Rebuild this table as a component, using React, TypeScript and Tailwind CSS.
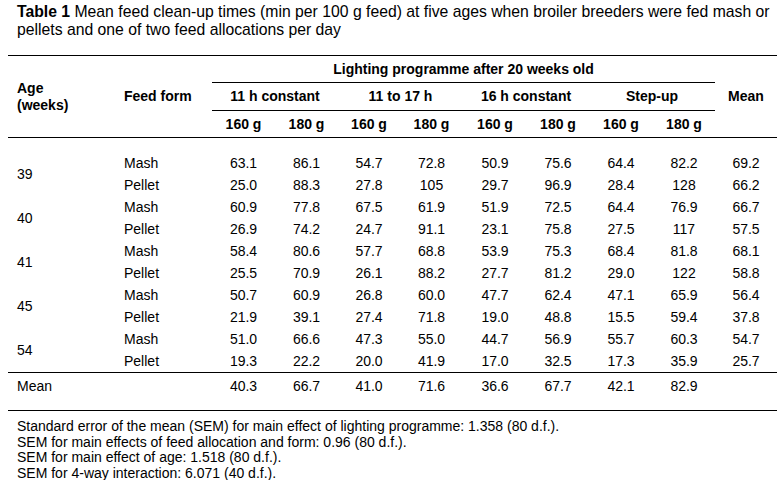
const rows = [
  { age: "39", mash: ["63.1", "86.1", "54.7", "72.8", "50.9", "75.6", "64.4", "82.2", "69.2"], pellet: ["25.0", "88.3", "27.8", "105", "29.7", "96.9", "28.4", "128", "66.2"] },
  { age: "40", mash: ["60.9", "77.8", "67.5", "61.9", "51.9", "72.5", "64.4", "76.9", "66.7"], pellet: ["26.9", "74.2", "24.7", "91.1", "23.1", "75.8", "27.5", "117", "57.5"] },
  { age: "41", mash: ["58.4", "80.6", "57.7", "68.8", "53.9", "75.3", "68.4", "81.8", "68.1"], pellet: ["25.5", "70.9", "26.1", "88.2", "27.7", "81.2", "29.0", "122", "58.8"] },
  { age: "45", mash: ["50.7", "60.9", "26.8", "60.0", "47.7", "62.4", "47.1", "65.9", "56.4"], pellet: ["21.9", "39.1", "27.4", "71.8", "19.0", "48.8", "15.5", "59.4", "37.8"] },
  { age: "54", mash: ["51.0", "66.6", "47.3", "55.0", "44.7", "56.9", "55.7", "60.3", "54.7"], pellet: ["19.3", "22.2", "20.0", "41.9", "17.0", "32.5", "17.3", "35.9", "25.7"] },
]

const means = ["40.3", "66.7", "41.0", "71.6", "36.6", "67.7", "42.1", "82.9", ""]
const groups = ["11 h constant", "11 to 17 h", "16 h constant", "Step-up"]

export default function App() {
  return (
    <div className="w-[780px] h-[480px] bg-white text-black overflow-hidden font-['Liberation_Sans',Arial,sans-serif]">
      <p className="pl-[17px] pt-[3px] text-[15.75px] leading-[17.5px] whitespace-nowrap">
        <b>Table 1</b> Mean feed clean-up times (min per 100 g feed) at five ages when broiler breeders were fed mash or
        <br />
        pellets and one of two feed allocations per day
      </p>

      <table className="ml-2 mt-[17px] w-[769px] table-fixed border-collapse text-[14px]">
        <colgroup>
          <col className="w-[109px]" />
          <col className="w-[95px]" />
          <col className="w-[63px]" />
          <col className="w-[63px]" />
          <col className="w-[62px]" />
          <col className="w-[63px]" />
          <col className="w-[64px]" />
          <col className="w-[62px]" />
          <col className="w-[64px]" />
          <col className="w-[62px]" />
          <col className="w-[62px]" />
        </colgroup>
        <thead className="font-bold">
          <tr className="h-[27px] border-t border-black">
            <th rowSpan={3} className="pl-[9px] text-left align-middle font-bold leading-[17px] border-b border-black">
              Age
              <br />
              (weeks)
            </th>
            <th rowSpan={3} className="pl-[7px] text-left align-middle font-bold border-b border-black">
              Feed form
            </th>
            <th colSpan={8} className="text-center font-bold border-b border-black">
              Lighting programme after 20 weeks old
            </th>
            <th rowSpan={3} className="text-center font-bold border-b border-black">
              Mean
            </th>
          </tr>
          <tr className="h-[28px]">
            {groups.map((g) => (
              <th key={g} colSpan={2} className="text-center font-bold border-b border-black">
                {g}
              </th>
            ))}
          </tr>
          <tr className="h-[27px] border-b border-black">
            {groups.map((g) => (
              <>
                <th key={g + "a"} className="text-center font-bold">160 g</th>
                <th key={g + "b"} className="text-center font-bold">180 g</th>
              </>
            ))}
          </tr>
        </thead>
        <tbody>
          <tr className="h-[15px]">
            <td colSpan={11}></td>
          </tr>
          {rows.map((r) => (
            <>
              <tr key={r.age + "m"} className="h-[22px]">
                <td rowSpan={2} className="pl-[9px] align-middle">{r.age}</td>
                <td className="pl-[7px]">Mash</td>
                {r.mash.map((v, i) => (
                  <td key={i} className="text-center">{v}</td>
                ))}
              </tr>
              <tr key={r.age + "p"} className="h-[22px]">
                <td className="pl-[7px]">Pellet</td>
                {r.pellet.map((v, i) => (
                  <td key={i} className="text-center">{v}</td>
                ))}
              </tr>
            </>
          ))}
          <tr className="h-[26px] border-t border-black">
            <td className="pl-[9px] pt-[2px]">Mean</td>
            <td></td>
            {means.map((v, i) => (
              <td key={i} className="text-center pt-[2px]">{v}</td>
            ))}
          </tr>
          <tr className="h-[12px] border-b border-black">
            <td colSpan={11}></td>
          </tr>
        </tbody>
      </table>

      <div className="mt-[8px] pl-[17px] text-[14px] leading-[15.6px]">
        <p>Standard error of the mean (SEM) for main effect of lighting programme: 1.358 (80 d.f.).</p>
        <p>SEM for main effects of feed allocation and form: 0.96 (80 d.f.).</p>
        <p>SEM for main effect of age: 1.518 (80 d.f.).</p>
        <p>SEM for 4-way interaction: 6.071 (40 d.f.).</p>
      </div>
    </div>
  )
}
